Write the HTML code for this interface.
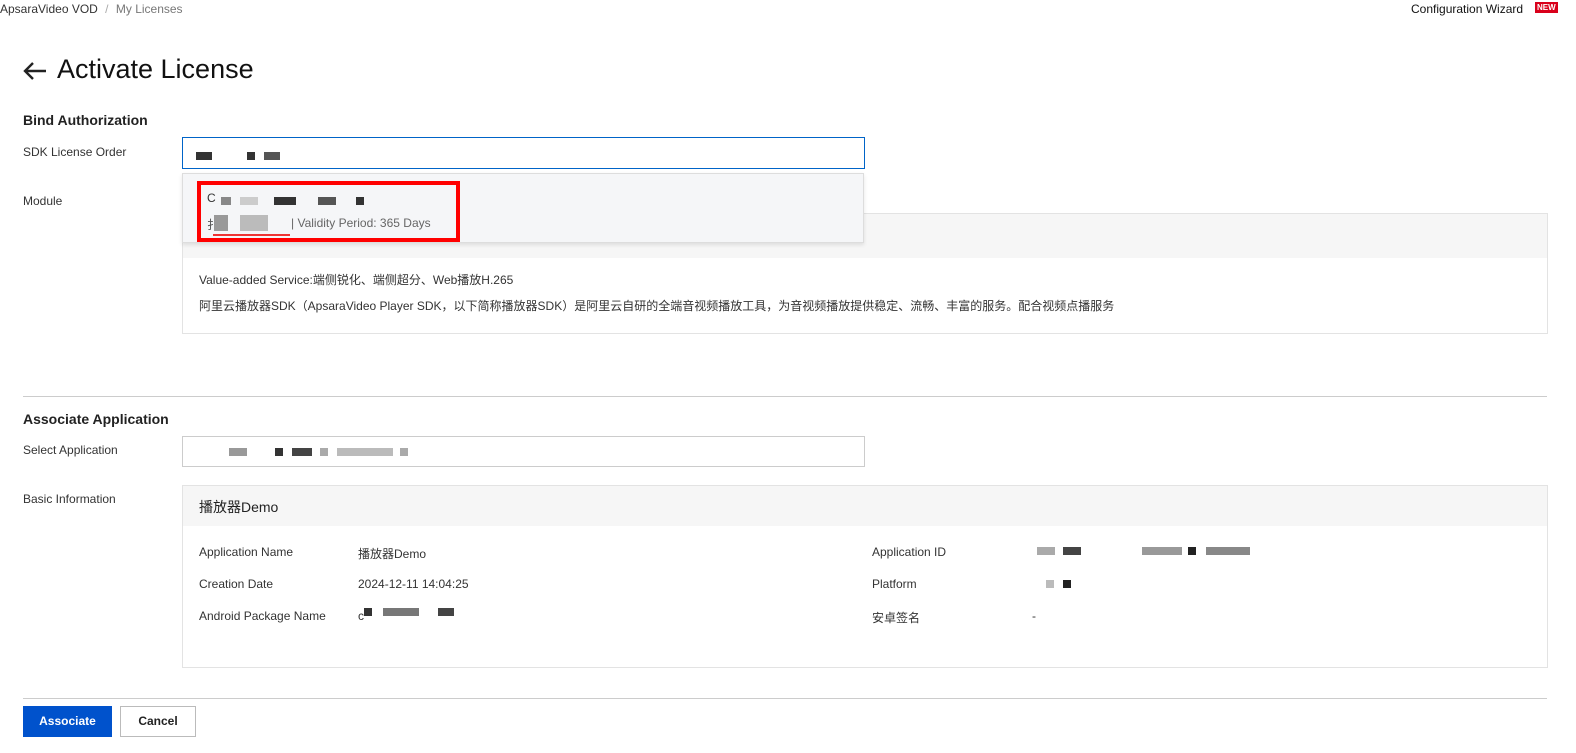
<!DOCTYPE html><html><head><meta charset="utf-8"><style>
*{margin:0;padding:0;box-sizing:border-box}
body{width:1576px;height:753px;background:#fff;font-family:"Liberation Sans","Noto Sans CJK SC",sans-serif;color:#333;font-size:12px;position:relative;overflow:hidden}
.a{position:absolute;white-space:nowrap}
.px{position:absolute;height:8px}
</style></head><body>
<div class="a" style="left:0;top:2px;font-size:12px;color:#333">ApsaraVideo VOD <span style="color:#aaa;margin:0 4px">/</span> <span style="color:#777">My Licenses</span></div>
<div class="a" style="left:1411px;top:2px;font-size:12px;color:#111">Configuration Wizard</div>
<div class="a" style="left:1535px;top:2px;background:#d9001b;color:#fff;font-size:8px;font-weight:bold;padding:1px 2px">NEW</div>
<svg class="a" style="left:22px;top:60px" width="26" height="22" viewBox="0 0 26 22"><path d="M24 11H3M11 3L3 11l8 8" stroke="#222" stroke-width="2.4" fill="none"/></svg>
<div class="a" style="left:57px;top:54px;font-size:27px;color:#111">Activate License</div>
<div class="a" style="left:23px;top:112px;font-size:14px;font-weight:bold;color:#222">Bind Authorization</div>
<div class="a" style="left:23px;top:145px">SDK License Order</div>
<div class="a" style="left:182px;top:137px;width:683px;height:32px;border:1px solid #0064c8"></div>
<div class="px" style="left:196px;top:152px;width:16px;background:#333"></div><div class="px" style="left:247px;top:152px;width:8px;background:#333"></div><div class="px" style="left:264px;top:152px;width:16px;background:#555"></div>
<div class="a" style="left:23px;top:194px">Module</div>
<div class="a" style="left:182px;top:213px;width:1366px;height:121px;border:1px solid #e3e3e3"></div>
<div class="a" style="left:183px;top:214px;width:1364px;height:44px;background:#f6f6f6"></div>
<div class="a" style="left:199px;top:271px;font-size:12px">Value-added Service:端侧锐化、端侧超分、Web播放H.265</div>
<div class="a" style="left:199px;top:297px;font-size:12px">阿里云播放器SDK（ApsaraVideo Player SDK，以下简称播放器SDK）是阿里云自研的全端音视频播放工具，为音视频播放提供稳定、流畅、丰富的服务。配合视频点播服务</div>
<div class="a" style="left:182px;top:173px;width:682px;height:70px;background:#f5f6f8;border:1px solid #ddd;box-shadow:0 2px 4px rgba(0,0,0,.1)"></div>
<div class="a" style="left:197px;top:181px;width:263px;height:61px;border:4px solid #f00"></div>
<div class="a" style="left:207px;top:191px;font-size:12px">C</div>
<div class="px" style="left:221px;top:197px;width:10px;background:#888"></div><div class="px" style="left:240px;top:197px;width:18px;background:#ccc"></div><div class="px" style="left:274px;top:197px;width:22px;background:#333"></div><div class="px" style="left:318px;top:197px;width:18px;background:#555"></div><div class="px" style="left:356px;top:197px;width:8px;background:#333"></div>
<div class="a" style="left:207px;top:216px;font-size:12px;color:#555">扌</div>
<div class="a" style="left:214px;top:215px;width:14px;height:16px;background:#999"></div><div class="a" style="left:240px;top:215px;width:28px;height:16px;background:#bbb"></div>
<div class="a" style="left:213px;top:234px;width:77px;height:2px;background:#e33"></div>
<div class="a" style="left:291px;top:216px;font-size:12px;color:#666">| Validity Period: 365 Days</div>
<div class="a" style="left:23px;top:396px;width:1524px;height:1px;background:#ccc"></div>
<div class="a" style="left:23px;top:411px;font-size:14px;font-weight:bold;color:#222">Associate Application</div>
<div class="a" style="left:23px;top:443px">Select Application</div>
<div class="a" style="left:182px;top:436px;width:683px;height:31px;border:1px solid #ccc"></div>
<div class="px" style="left:229px;top:448px;width:18px;background:#999"></div><div class="px" style="left:275px;top:448px;width:8px;background:#333"></div><div class="px" style="left:292px;top:448px;width:20px;background:#444"></div><div class="px" style="left:320px;top:448px;width:8px;background:#aaa"></div><div class="px" style="left:337px;top:448px;width:56px;background:#bbb"></div><div class="px" style="left:400px;top:448px;width:8px;background:#aaa"></div>
<div class="a" style="left:23px;top:492px">Basic Information</div>
<div class="a" style="left:182px;top:485px;width:1366px;height:183px;border:1px solid #e3e3e3"></div>
<div class="a" style="left:183px;top:486px;width:1364px;height:40px;background:#f6f6f6"></div>
<div class="a" style="left:199px;top:497px;font-size:14px;color:#222">播放器Demo</div>
<div class="a" style="left:199px;top:545px">Application Name</div><div class="a" style="left:358px;top:545px">播放器Demo</div>
<div class="a" style="left:199px;top:577px">Creation Date</div><div class="a" style="left:358px;top:577px">2024-12-11 14:04:25</div>
<div class="a" style="left:199px;top:609px">Android Package Name</div><div class="a" style="left:358px;top:609px">c</div>
<div class="px" style="left:364px;top:608px;width:8px;background:#333"></div><div class="px" style="left:383px;top:608px;width:36px;background:#777"></div><div class="px" style="left:438px;top:608px;width:16px;background:#444"></div>
<div class="a" style="left:872px;top:545px">Application ID</div>
<div class="px" style="left:1037px;top:547px;width:18px;background:#aaa"></div><div class="px" style="left:1063px;top:547px;width:18px;background:#444"></div><div class="px" style="left:1142px;top:547px;width:40px;background:#999"></div><div class="px" style="left:1188px;top:547px;width:8px;background:#222"></div><div class="px" style="left:1206px;top:547px;width:44px;background:#888"></div>
<div class="a" style="left:872px;top:577px">Platform</div>
<div class="px" style="left:1046px;top:580px;width:8px;background:#bbb"></div><div class="px" style="left:1063px;top:580px;width:8px;background:#222"></div>
<div class="a" style="left:872px;top:609px">安卓签名</div><div class="a" style="left:1032px;top:609px">-</div>
<div class="a" style="left:23px;top:698px;width:1524px;height:1px;background:#ccc"></div>
<div class="a" style="left:23px;top:706px;width:89px;height:31px;background:#0052cc;color:#fff;font-weight:bold;text-align:center;line-height:31px">Associate</div>
<div class="a" style="left:120px;top:706px;width:76px;height:31px;border:1px solid #bbb;color:#222;font-weight:bold;text-align:center;line-height:29px">Cancel</div>
</body></html>
